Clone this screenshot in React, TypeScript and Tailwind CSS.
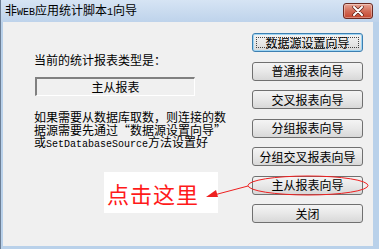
import React from 'react'

const cjk = { fontFamily: '"Noto Sans CJK SC", "Liberation Sans", sans-serif' }
const mono = { fontFamily: '"Liberation Mono", monospace' }

const Latin = ({ children }: { children: React.ReactNode }) => (
  <span className="text-[10px]" style={mono}>
    {children}
  </span>
)

// full-width quote cell, as in the SimSun original
const Quote = ({ ch, align }: { ch: string; align: 'left' | 'right' }) => (
  <span className={'inline-block w-[12px] ' + (align === 'left' ? 'text-left' : 'text-right')}>{ch}</span>
)

const WizardButton = ({ label, focused = false }: { label: string; focused?: boolean }) => {
  return (
    <div
      className={
        'relative flex h-[19px] w-[111px] items-center justify-center rounded-[3px] border bg-gradient-to-b from-[#f4f4f4] via-[#e8e8e8] to-[#d8d8d8] text-[12px] leading-none text-black ' +
        (focused ? 'border-[#3c7fb1] shadow-[inset_0_0_0_1px_#9fd5f3]' : 'border-[#707070]')
      }
    >
      {focused && <span className="absolute inset-[3px] border border-dotted border-black/70" />}
      <span className="relative">{label}</span>
    </div>
  )
}

const buttons = ['普通报表向导', '交叉报表向导', '分组报表向导', '分组交叉报表向导', '主从报表向导', '关闭']

const App = () => {
  return (
    <div className="relative flex h-[249px] w-[379px] flex-col overflow-hidden bg-[#b9d1ea]" style={cjk}>
      {/* title bar */}
      <div className="flex h-[22px] shrink-0 items-center justify-between border-l border-[#6d7f96] bg-gradient-to-b from-[#d6e4f4] to-[#bed3eb] pl-[4px] pr-[6px]">
        <div className="whitespace-nowrap text-[12px] leading-none text-black">
          非<Latin>WEB</Latin>应用统计脚本<Latin>1</Latin>向导
        </div>
        <div className="flex h-[16px] w-[30px] items-center justify-center rounded-[3px] border border-[#6b2a22] bg-gradient-to-b from-[#e7a595] via-[#d26c58] to-[#c4442d] shadow-[inset_0_0_0_1px_rgba(255,255,255,0.35)]">
          <svg width="12" height="10" viewBox="0 0 12 10">
            <path d="M2 1 L10 9 M10 1 L2 9" stroke="#5a2018" strokeWidth="3.4" strokeLinecap="round" />
            <path d="M2 1 L10 9 M10 1 L2 9" stroke="#ffffff" strokeWidth="2" strokeLinecap="round" />
          </svg>
        </div>
      </div>

      {/* frame + client */}
      <div className="flex min-h-0 flex-1 border-l border-[#6d7f96] pb-[3px] pl-[2px] pr-[6px]">
        <div className="flex flex-1 bg-[#f0f0f0] text-[12px] text-black">
          <div className="flex flex-1 flex-col pl-[31px] pt-[31px]">
            <div className="whitespace-nowrap leading-[14px]">当前的统计报表类型是：</div>
            <div className="ml-px mt-[10px] flex h-[19px] w-[160px] items-center justify-center border-b border-l-2 border-r border-t-2 border-b-white border-l-[#808080] border-r-white border-t-[#808080] leading-none">
              主从报表
            </div>
            <div className="mt-[15px] whitespace-nowrap leading-[12.5px]">
              <div>如果需要从数据库取数，则连接的数</div>
              <div>
                据源需要先通过<Quote ch="“" align="right" />数据源设置向导<Quote ch="”" align="left" />
              </div>
              <div>
                或<Latin>SetDatabaseSource</Latin>方法设置好
              </div>
            </div>
          </div>
          <div className="flex flex-col gap-[9.5px] pr-[10px] pt-[11px]">
            <WizardButton label="数据源设置向导" focused />
            {buttons.map((b) => (
              <WizardButton key={b} label={b} />
            ))}
          </div>
        </div>
      </div>

      {/* annotation overlay */}
      <div className="absolute left-[104px] top-[172px] flex h-[41px] w-[114px] items-center bg-white pl-[3px]">
        <span className="text-[22px] leading-none tracking-[1px] text-[#ff1a1a]">点击这里</span>
      </div>
      <svg className="pointer-events-none absolute left-0 top-0" width="379" height="249" viewBox="0 0 379 249">
        <ellipse cx="308" cy="185.5" rx="60" ry="9.5" fill="none" stroke="#ee2020" strokeWidth="1" />
        <line x1="248" y1="186" x2="214" y2="195" stroke="#ee2020" strokeWidth="1" />
        <polygon points="206,197 216,190 218,197" fill="#ee2020" />
      </svg>
    </div>
  )
}

export default App
